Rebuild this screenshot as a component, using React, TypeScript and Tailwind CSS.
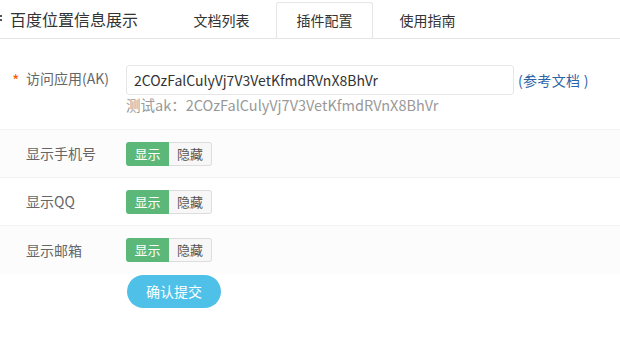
import React, { useState } from 'react';

type Toggle = { key: string; label: string };

const toggles: Toggle[] = [
  { key: 'phone', label: '显示手机号' },
  { key: 'qq', label: '显示QQ' },
  { key: 'email', label: '显示邮箱' },
];

const tabs = ['文档列表', '插件配置', '使用指南'];

const App: React.FC = () => {
  const [activeTab, setActiveTab] = useState('插件配置');
  const [ak, setAk] = useState('2COzFalCulyVj7V3VetKfmdRVnX8BhVr');
  const [shown, setShown] = useState<Record<string, boolean>>({ phone: true, qq: true, email: true });

  return (
    <div className="w-[620px] h-[339px] bg-white overflow-hidden text-[14px] text-[#333]" style={{ fontFamily: '"Microsoft YaHei", "Noto Sans CJK SC", sans-serif' }}>
      {/* header with tabs */}
      <div className="flex items-end h-[39px] border-b border-[#e5e5e5]">
        <div className="relative h-full flex items-center pl-[10px] w-[173px] shrink-0">
          <span className="absolute left-0 top-[15px] flex flex-col gap-[2px]">
            <span className="block w-[2px] h-[2px] bg-[#555]" />
            <span className="block w-[2px] h-[2px] bg-[#555]" />
          </span>
          <span className="text-[16px] text-[#333] leading-none">百度位置信息展示</span>
        </div>
        <div className="flex gap-[6px] h-[36px]">
          {tabs.map((t) => (
            <button
              key={t}
              onClick={() => setActiveTab(t)}
              className={`w-[97px] h-full text-[14px] text-[#333] rounded-t-[3px] border border-b-0 mb-[-1px] ${
                activeTab === t ? 'bg-white border-[#e5e5e5] h-[37px]' : 'border-transparent'
              }`}
            >
              {t}
            </button>
          ))}
        </div>
      </div>

      {/* AK row */}
      <div className="flex pt-[26px] pb-[14px] border-b border-[#f2f2f2]">
        <div className="w-[126px] shrink-0 pl-[12px] flex items-start h-[30px] pt-[3px] text-[#666]">
          <span className="w-[14px] text-[#ff5a00] text-[16px] leading-[24px]">*</span>
          <span>访问应用(AK)</span>
        </div>
        <div className="flex flex-col">
          <div className="flex items-center">
            <input
              value={ak}
              onChange={(e) => setAk(e.target.value)}
              className="w-[388px] h-[30px] px-[7px] border border-[#e6e6e6] rounded-[3px] outline-none text-[#333] text-[14px]"
            />
            <a href="#" className="ml-[4px] text-[#2d64a8] text-[14px] tracking-[0.3px]">(参考文档 )</a>
          </div>
          <div className="text-[#999] leading-[20px] text-[14.5px]">测试ak：2COzFalCulyVj7V3VetKfmdRVnX8BhVr</div>
        </div>
      </div>

      {/* toggle rows */}
      {toggles.map((row, i) => (
        <div
          key={row.key}
          className={`flex items-center h-[48px] ${i < toggles.length - 1 ? 'border-b border-[#f2f2f2]' : ''} ${i % 2 === 0 ? 'bg-[#fcfcfc]' : 'bg-white'}`}
        >
          <div className="w-[126px] shrink-0 pl-[26px] text-[#666]">{row.label}</div>
          <div className="flex h-[24px] text-[13px]">
            <button
              onClick={() => setShown({ ...shown, [row.key]: true })}
              className={`w-[43px] rounded-l-[3px] ${shown[row.key] ? 'bg-[#5cb878] text-white' : 'bg-[#f7f7f7] text-[#555] border border-[#ddd]'}`}
            >
              显示
            </button>
            <button
              onClick={() => setShown({ ...shown, [row.key]: false })}
              className={`w-[43px] rounded-r-[3px] ${!shown[row.key] ? 'bg-[#5cb878] text-white' : 'bg-[#f7f7f7] text-[#555] border border-l-0 border-[#ddd]'}`}
            >
              隐藏
            </button>
          </div>
        </div>
      ))}

      <div className="pl-[127px] pt-[1px]">
        <button className="w-[94px] h-[33px] rounded-full bg-[#4fc1e9] text-white text-[14px]">确认提交</button>
      </div>
    </div>
  );
};

export default App;
